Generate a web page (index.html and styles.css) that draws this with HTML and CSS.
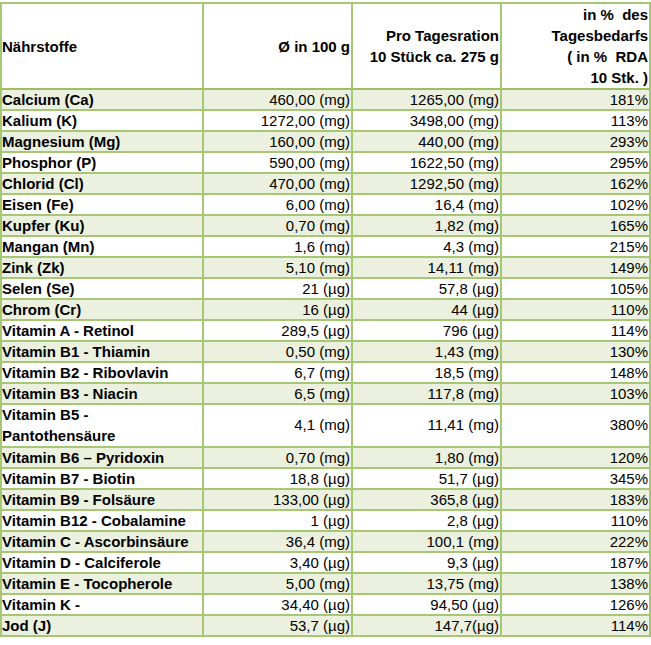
FILE: index.html
```html
<!DOCTYPE html>
<html lang="de">
<head>
<meta charset="utf-8">
<title>Nährstoffe</title>
<link rel="stylesheet" href="styles.css">
</head>
<body>
<table class="nt">
  <colgroup>
    <col class="c1"><col class="c2"><col class="c3"><col class="c4">
  </colgroup>
  <thead>
    <tr>
      <th class="name">Nährstoffe</th>
      <th>Ø in 100 g</th>
      <th>Pro Tagesration<br>10 Stück ca. 275 g</th>
      <th>in %&nbsp; des<br>Tagesbedarfs<br>( in %&nbsp; RDA<br>10 Stk. )</th>
    </tr>
  </thead>
  <tbody>
    <tr class="g"><td class="name">Calcium (Ca)</td><td>460,00 (mg)</td><td>1265,00 (mg)</td><td>181%</td></tr>
    <tr><td class="name">Kalium (K)</td><td>1272,00 (mg)</td><td>3498,00 (mg)</td><td>113%</td></tr>
    <tr class="g"><td class="name">Magnesium (Mg)</td><td>160,00 (mg)</td><td>440,00 (mg)</td><td>293%</td></tr>
    <tr><td class="name">Phosphor (P)</td><td>590,00 (mg)</td><td>1622,50 (mg)</td><td>295%</td></tr>
    <tr class="g"><td class="name">Chlorid (Cl)</td><td>470,00 (mg)</td><td>1292,50 (mg)</td><td>162%</td></tr>
    <tr><td class="name">Eisen (Fe)</td><td>6,00 (mg)</td><td>16,4 (mg)</td><td>102%</td></tr>
    <tr class="g"><td class="name">Kupfer (Ku)</td><td>0,70 (mg)</td><td>1,82 (mg)</td><td>165%</td></tr>
    <tr><td class="name">Mangan (Mn)</td><td>1,6 (mg)</td><td>4,3 (mg)</td><td>215%</td></tr>
    <tr class="g"><td class="name">Zink (Zk)</td><td>5,10 (mg)</td><td>14,11 (mg)</td><td>149%</td></tr>
    <tr><td class="name">Selen (Se)</td><td>21 (µg)</td><td>57,8 (µg)</td><td>105%</td></tr>
    <tr class="g"><td class="name">Chrom (Cr)</td><td>16 (µg)</td><td>44 (µg)</td><td>110%</td></tr>
    <tr><td class="name">Vitamin A - Retinol</td><td>289,5 (µg)</td><td>796 (µg)</td><td>114%</td></tr>
    <tr class="g"><td class="name">Vitamin B1 - Thiamin</td><td>0,50 (mg)</td><td>1,43 (mg)</td><td>130%</td></tr>
    <tr><td class="name">Vitamin B2 - Ribovlavin</td><td>6,7 (mg)</td><td>18,5 (mg)</td><td>148%</td></tr>
    <tr class="g"><td class="name">Vitamin B3 - Niacin</td><td>6,5 (mg)</td><td>117,8 (mg)</td><td>103%</td></tr>
    <tr class="tall"><td class="name">Vitamin B5 -<br>Pantothensäure</td><td>4,1 (mg)</td><td>11,41 (mg)</td><td>380%</td></tr>
    <tr class="g"><td class="name">Vitamin B6 – Pyridoxin</td><td>0,70 (mg)</td><td>1,80 (mg)</td><td>120%</td></tr>
    <tr><td class="name">Vitamin B7 - Biotin</td><td>18,8 (µg)</td><td>51,7 (µg)</td><td>345%</td></tr>
    <tr class="g"><td class="name">Vitamin B9 - Folsäure</td><td>133,00 (µg)</td><td>365,8 (µg)</td><td>183%</td></tr>
    <tr><td class="name">Vitamin B12 - Cobalamine</td><td>1 (µg)</td><td>2,8 (µg)</td><td>110%</td></tr>
    <tr class="g"><td class="name">Vitamin C - Ascorbinsäure</td><td>36,4 (mg)</td><td>100,1 (mg)</td><td>222%</td></tr>
    <tr><td class="name">Vitamin D - Calciferole</td><td>3,40 (µg)</td><td>9,3 (µg)</td><td>187%</td></tr>
    <tr class="g"><td class="name">Vitamin E - Tocopherole</td><td>5,00 (mg)</td><td>13,75 (mg)</td><td>138%</td></tr>
    <tr><td class="name">Vitamin K -</td><td>34,40 (µg)</td><td>94,50 (µg)</td><td>126%</td></tr>
    <tr class="g"><td class="name">Jod (J)</td><td>53,7 (µg)</td><td>147,7(µg)</td><td>114%</td></tr>
  </tbody>
</table>
</body>
</html>
```

FILE: styles.css
```css
html, body {
  margin: 0;
  padding: 0;
  background: #ffffff;
}

body {
  font-family: "Liberation Sans", Arial, sans-serif;
  font-size: 15px;
  color: #000;
}

.nt {
  margin-top: 2px;
  width: 651px;
  table-layout: fixed;
  border-collapse: separate;
  border-spacing: 0;
}

.c1 { width: 204px; }
.c2, .c3, .c4 { width: 149px; }

.nt th,
.nt td {
  padding: 0 1px 0 2px;
  border-right: 2px solid #a6c874;
  border-bottom: 2px solid #a6c874;
  text-align: right;
  vertical-align: middle;
  white-space: nowrap;
  overflow: hidden;
}

.nt th:first-child,
.nt td:first-child {
  border-left: 2px solid #a6c874;
}

.nt th {
  font-weight: bold;
  line-height: 21px;
  height: 84px;
  border-top: 2px solid #a6c874;
  border-bottom: 2px solid #9bbf62;
}

.nt td {
  font-weight: normal;
  height: 19px;
  line-height: 19px;
}

.nt .name {
  text-align: left;
  font-weight: bold;
  padding-left: 0;
}

.nt tr.g td {
  background: #ebf1de;
}

.nt tr.tall td {
  height: 40px;
  line-height: 20.5px;
}
```
